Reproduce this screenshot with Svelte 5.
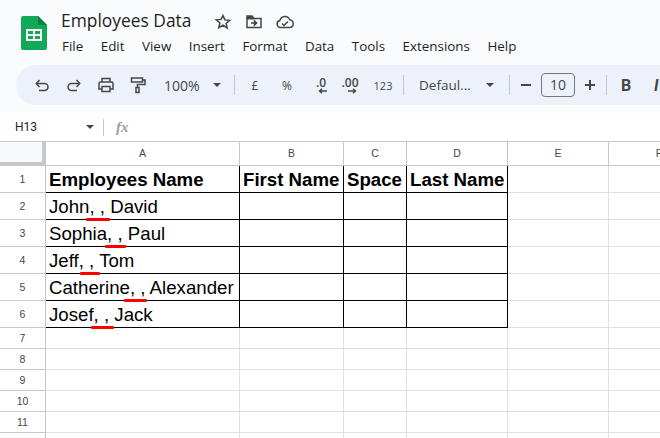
<script>
    const colLabels = ["A", "B", "C", "D", "E", "F"];
    const names = [
        { text: "John, , David", mark: [40, 24] },
        { text: "Sophia, , Paul", mark: [59, 21] },
        { text: "Jeff, , Tom", mark: [34, 20] },
        { text: "Catherine, , Alexander", mark: [78, 23] },
        { text: "Josef, , Jack", mark: [45, 23] },
    ];
    const heads = ["Employees Name", "First Name", "Space", "Last Name"];
    const menus = ["File", "Edit", "View", "Insert", "Format", "Data", "Tools", "Extensions", "Help"];
    const emptyRows = [7, 8, 9, 10, 11, ""];
</script>

<div class="page">
    <header class="top">
        <svg class="logo" viewBox="0 0 26 34" width="26" height="34">
            <path d="M2 0h15l9 9v23a2 2 0 0 1-2 2H2a2 2 0 0 1-2-2V2a2 2 0 0 1 2-2z" fill="#0fa958" />
            <path d="M17 0l9 9h-9z" fill="#0b7f42" />
            <path d="M5 13h16v12H5z" fill="#fff" />
            <path d="M7 15h5v3H7zM14 15h5v3h-5zM7 20h5v3H7zM14 20h5v3h-5z" fill="#0fa958" />
        </svg>
        <div class="titles">
            <div class="title-row">
                <span class="doc">Employees Data</span>
                <svg class="star" viewBox="0 0 18 18" width="18" height="18" fill="none" stroke="#444746" stroke-width="1.5"><path d="M9 2.5l1.9 4.4 4.8.4-3.6 3.1 1.1 4.7L9 12.1l-4.2 2.5 1.1-4.7-3.6-3.1 4.8-.4z" /></svg>
                <svg class="move" viewBox="0 0 18 18" width="18" height="18" fill="none" stroke="#444746" stroke-width="1.5"><path d="M2 5.5h14v9H2z" /><path d="M2 3h5l2 2.5H2z" fill="#444746" /><path d="M6 10h5" /><path d="M9.5 8l2.2 2-2.2 2z" fill="#444746" /></svg>
                <svg class="cloud" viewBox="0 0 20 18" width="20" height="18" fill="none" stroke="#444746" stroke-width="1.5"><path d="M5.5 14.5a3.6 3.6 0 0 1-.6-7.1 5.2 5.2 0 0 1 9.9-.6 3.9 3.9 0 0 1 .2 7.7z" /><path d="M7 10.5l2 2 4-4" /></svg>
            </div>
            <nav class="menu">
                {#each menus as m}<span>{m}</span>{/each}
            </nav>
        </div>
    </header>

    <div class="barwrap">
        <div class="toolbar">
            <svg class="ic first" viewBox="0 0 18 18" fill="none" stroke="#444746" stroke-width="1.5"><path d="M3.5 7.5h8a3.5 3.5 0 0 1 0 7H6" /><path d="M6.5 4l-3.2 3.5L6.5 11" /></svg>
            <svg class="ic" viewBox="0 0 18 18" fill="none" stroke="#444746" stroke-width="1.5"><path d="M14.5 7.5h-8a3.5 3.5 0 0 0 0 7H12" /><path d="M11.5 4l3.2 3.5-3.2 3.5" /></svg>
            <svg class="ic" viewBox="0 0 18 18" fill="none" stroke="#444746" stroke-width="1.5"><path d="M5 6V2.5h8V6" /><path d="M5 13H2V7.5a1.5 1.5 0 0 1 1.5-1.5h11A1.5 1.5 0 0 1 16 7.5V13h-3" /><path d="M5 10.5h8v5H5z" /></svg>
            <svg class="ic" viewBox="0 0 18 18" fill="none" stroke="#444746" stroke-width="1.5"><path d="M2.5 2h11v4h-11z" /><path d="M13.5 4h2.5v4.5H8.5v3" /><path d="M7 11.5h3v5H7z" /></svg>
            <span class="zoom">100%</span>
            <i class="caret zoomcaret"></i>
            <b class="sep s1"></b>
            <span class="tb pound">£</span>
            <span class="tb pct">%</span>
            <span class="dec d1">.0<svg viewBox="0 0 10 6" width="10" height="6"><path d="M9 3H2M4 .8L1.5 3 4 5.2" fill="none" stroke="#444746" stroke-width="1.4" /></svg></span>
            <span class="dec d2">.00<svg viewBox="0 0 10 6" width="10" height="6"><path d="M1 3h7M6 .8L8.5 3 6 5.2" fill="none" stroke="#444746" stroke-width="1.4" /></svg></span>
            <span class="tb num">123</span>
            <b class="sep s2"></b>
            <span class="font">Defaul...</span>
            <i class="caret fontcaret"></i>
            <b class="sep s3"></b>
            <span class="minus"></span>
            <span class="size">10</span>
            <span class="plus"></span>
            <b class="sep s4"></b>
            <span class="bold">B</span>
            <span class="ital">I</span>
        </div>
    </div>

    <div class="formula">
        <span class="ref">H13</span>
        <i class="caret refcaret"></i>
        <b class="fsep"></b>
        <span class="fx">fx</span>
    </div>

    <div class="sheet">
        <div class="corner"></div>
        {#each colLabels as c}<div class="colhead">{c}</div>{/each}

        <div class="rowhead">1</div>
        {#each heads as h}<div class="cell hd">{h}</div>{/each}
        <div class="cell"></div><div class="cell"></div>

        {#each names as n, i}
            <div class="rowhead">{i + 2}</div>
            <div class="cell name">
                {n.text}
                <span class="mark" style="left: {n.mark[0]}px; width: {n.mark[1]}px"></span>
            </div>
            <div class="cell boxed"></div><div class="cell boxed"></div><div class="cell boxed"></div>
            <div class="cell"></div><div class="cell"></div>
        {/each}

        {#each emptyRows as r}
            <div class="rowhead">{r}</div>
            {#each colLabels as c}<div class="cell"></div>{/each}
        {/each}
    </div>
</div>

<style>
    :global(body) {
        margin: 0;
        overflow: hidden;
        background: #fff;
    }
    .page {
        width: 660px;
        height: 438px;
        overflow: hidden;
        font-family: "Liberation Sans", Arial, sans-serif;
    }
    .top {
        height: 65px;
        box-sizing: border-box;
        padding: 16px 0 0 21px;
        background: #f9fbfd;
        display: flex;
    }
    .logo {
        flex: none;
    }
    .titles {
        margin-left: 14px;
        margin-top: -10px;
    }
    .title-row {
        display: flex;
        align-items: center;
        height: 28px;
    }
    .doc {
        font-family: "Open Sans", sans-serif;
        font-size: 17.4px;
        color: #1f1f1f;
        width: 153px;
    }
    .star {
        margin-top: 3px;
    }
    .move {
        margin-left: 13px;
        margin-top: 3px;
    }
    .cloud {
        margin-left: 12px;
        margin-top: 3px;
    }
    .menu {
        display: flex;
        gap: 17.5px;
        margin-top: 3px;
        margin-left: 1px;
        font-family: "Open Sans", sans-serif;
        font-size: 13.4px;
        line-height: 18px;
        color: #1f1f1f;
    }
    .barwrap {
        height: 48px;
        background: #f9fbfd;
        padding-left: 16px;
    }
    .toolbar {
        height: 40px;
        width: 680px;
        background: #edf2fa;
        border-radius: 20px 0 0 20px;
        display: flex;
        align-items: center;
        color: #444746;
        font-family: "Open Sans", sans-serif;
    }
    .ic {
        width: 18px;
        height: 18px;
        margin-left: 14px;
        flex: none;
    }
    .ic.first {
        margin-left: 17px;
    }
    .zoom {
        font-size: 14px;
        width: 49px;
        margin-left: 17px;
    }
    .caret {
        width: 0;
        height: 0;
        border-left: 4px solid transparent;
        border-right: 4px solid transparent;
        border-top: 4px solid #444746;
        flex: none;
    }
    .zoomcaret {
        margin-left: 0;
    }
    .sep {
        width: 1px;
        height: 20px;
        background: #c7c7c7;
        flex: none;
    }
    .s1 {
        margin-left: 13px;
    }
    .tb {
        font-size: 12px;
        text-align: center;
        flex: none;
    }
    .pound {
        width: 14px;
        margin-left: 13px;
    }
    .pct {
        width: 16px;
        margin-left: 17px;
    }
    .dec {
        position: relative;
        width: 22px;
        font-size: 12px;
        font-weight: 600;
        line-height: 17px;
        text-align: center;
        height: 22px;
        flex: none;
        margin-left: 15px;
    }
    .dec svg {
        position: absolute;
        left: 8px;
        top: 14px;
    }
    .d2 {
        margin-left: 7px;
    }
    .num {
        font-size: 11px;
        width: 20px;
        margin-left: 12px;
    }
    .s2 {
        margin-left: 10px;
    }
    .font {
        font-size: 13.5px;
        width: 56px;
        margin-left: 15px;
        flex: none;
    }
    .fontcaret {
        margin-left: 11px;
    }
    .s3 {
        margin-left: 15px;
    }
    .minus {
        width: 10px;
        height: 2px;
        background: #444746;
        margin-left: 11px;
        flex: none;
    }
    .size {
        width: 32px;
        height: 22px;
        border: 1px solid #747775;
        border-radius: 4px;
        font-size: 14px;
        line-height: 22px;
        text-align: center;
        margin-left: 10px;
        flex: none;
    }
    .plus {
        position: relative;
        width: 10px;
        height: 2px;
        background: #444746;
        margin-left: 10px;
        flex: none;
    }
    .plus::after {
        content: "";
        position: absolute;
        left: 4px;
        top: -4px;
        width: 2px;
        height: 10px;
        background: #444746;
    }
    .s4 {
        margin-left: 11px;
    }
    .bold {
        font-family: "Roboto", sans-serif;
        font-weight: 700;
        font-size: 16px;
        width: 12px;
        margin-left: 14px;
        flex: none;
    }
    .ital {
        font-family: "Roboto", sans-serif;
        font-style: italic;
        font-weight: 700;
        font-size: 16px;
        margin-left: 21px;
        flex: none;
    }
    .formula {
        height: 28px;
        display: flex;
        align-items: center;
        background: #fff;
    }
    .ref {
        font-family: "Roboto", sans-serif;
        font-size: 12px;
        color: #1f1f1f;
        margin-left: 15px;
        width: 71px;
        flex: none;
    }
    .fsep {
        width: 1px;
        height: 17px;
        background: #c7c7c7;
        margin-left: 9px;
    }
    .fx {
        font-family: "Liberation Serif", serif;
        font-style: italic;
        font-weight: 700;
        font-size: 15px;
        color: #9aa0a6;
        margin-left: 12px;
    }
    .sheet {
        display: grid;
        grid-template-columns: 46px 194px 104px 63px 101px 101px 101px;
        grid-template-rows: 24px repeat(6, 27px);
        grid-auto-rows: 21px;
        width: 710px;
        border-top: 1px solid #c7c7c7;
    }
    .corner {
        box-sizing: border-box;
        background: #f8f9fa;
        border-right: 4px solid #c7c7c7;
        border-bottom: 4px solid #c7c7c7;
    }
    .colhead {
        box-sizing: border-box;
        border-right: 1px solid #c7c7c7;
        border-bottom: 1px solid #c7c7c7;
        font-size: 10.5px;
        color: #444746;
        text-align: center;
        line-height: 23px;
    }
    .rowhead {
        box-sizing: border-box;
        background: #fff;
        border-right: 1px solid #c7c7c7;
        border-bottom: 1px solid #c7c7c7;
        font-size: 10.5px;
        color: #444746;
        display: flex;
        align-items: center;
        justify-content: center;
    }
    .cell {
        position: relative;
        box-sizing: border-box;
        border-right: 1px solid #e1e1e1;
        border-bottom: 1px solid #e1e1e1;
        white-space: nowrap;
    }
    .hd,
    .name,
    .boxed {
        border-right-color: #000;
        border-bottom-color: #000;
    }
    .hd,
    .name {
        font-size: 18.67px;
        line-height: 28px;
        padding-left: 3px;
        color: #000;
    }
    .hd {
        font-weight: 700;
    }
    .mark {
        position: absolute;
        bottom: -2px;
        height: 3px;
        background: #f00;
        border-radius: 1px;
    }
</style>
